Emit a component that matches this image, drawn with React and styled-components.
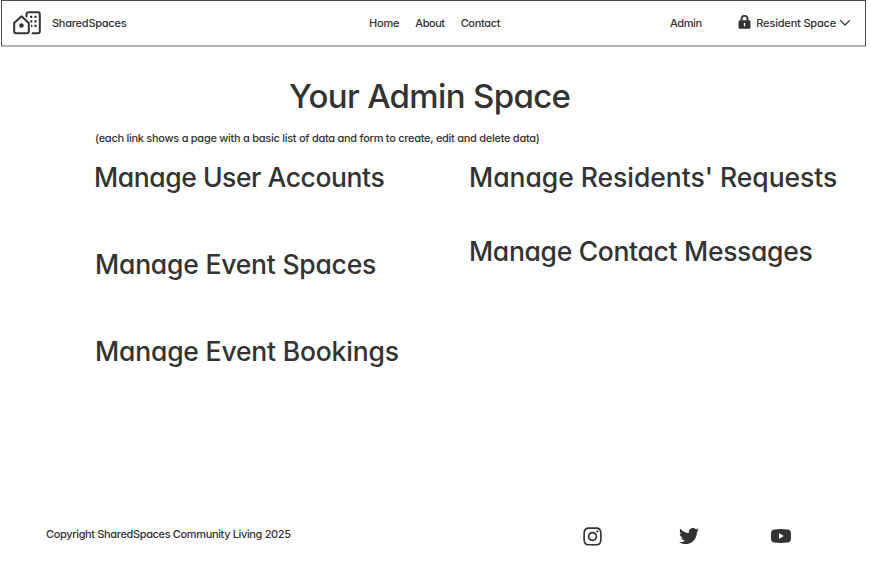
import React from "react";
import styled, { createGlobalStyle } from "styled-components";
import { FaInstagram, FaTwitter } from "react-icons/fa";

const ink = "#333333";

const Global = createGlobalStyle`
  * { box-sizing: border-box; }
  body { margin: 0; background: #fff; color: ${ink}; font-family: Inter, "Liberation Sans", sans-serif; font-feature-settings: "cv11"; }
  svg { display: block; flex: none; }
`;

const Page = styled.div`
  width: 871px;
  height: 573px;
  overflow: hidden;
`;

const Header = styled.header`
  display: grid;
  grid-template-columns: 356px 300px 1fr;
  align-items: center;
  width: 865px;
  height: 47px;
  margin-left: 1px;
  padding: 0 0 1px 11px;
  border: 1px solid #4a4a4a;
  border-bottom: 2px solid #b4b4b4;
`;

const Brand = styled.a`
  display: flex;
  align-items: center;
  gap: 11px;
`;

const Nav = styled.nav`
  display: flex;
  align-items: center;
  gap: 16px;
`;

const Account = styled.div`
  display: flex;
  align-items: center;
  justify-content: space-between;
  padding: 0 15px 0 1px;
`;

const SpaceMenu = styled.button`
  display: flex;
  align-items: center;
  gap: 4px;
  padding: 0;
  border: 0;
  background: none;
  color: inherit;
  font: inherit;
  font-feature-settings: inherit;
`;

const Small = styled.span`
  font-size: 11px;
  line-height: 16px;
  font-weight: 500;
  white-space: nowrap;
  letter-spacing: ${(p) => p.$track || 0}px;
`;

const Title = styled.h1`
  margin: 29px 0 0 289px;
  font-size: 33px;
  line-height: 40px;
  font-weight: 500;
  white-space: nowrap;
  letter-spacing: -0.66px;
`;

const Note = styled.p`
  margin: 12px 0 0 95px;
  line-height: 16px;
`;

const Columns = styled.main`
  display: grid;
  grid-template-columns: 375px 1fr;
  margin: 15px 0 0 94px;
  height: 341px;
  align-items: start;
`;

const Column = styled.div`
  display: flex;
  flex-direction: column;
  gap: ${(p) => p.$gap}px;
`;

const Link = styled.a`
  margin-left: ${(p) => p.$indent || 0}px;
  font-size: 26.5px;
  line-height: 32px;
  font-weight: 500;
  white-space: nowrap;
  letter-spacing: ${(p) => p.$track}px;
`;

const Footer = styled.footer`
  display: grid;
  grid-template-columns: 536px 97px 92px 1fr;
  align-items: start;
  margin: 24px 0 0 46px;
`;

const SocialIcon = styled.a`
  display: flex;
  align-items: center;
  height: 20px;
`;

const Logo = () => (
  <svg width="28" height="24" viewBox="0 0 28 24" fill="none" stroke={ink} strokeWidth="2" strokeLinejoin="round" strokeLinecap="round">
    <path d="M1.2 12.1 8.5 5.3l7.3 6.8v8.4a1.8 1.8 0 0 1-1.8 1.8H3a1.8 1.8 0 0 1-1.8-1.8z" />
    <path d="M13.5 5.5V3.2a2 2 0 0 1 2-2h9.3a2 2 0 0 1 2 2v17.1a2 2 0 0 1-2 2h-5.3" />
    <g fill={ink} stroke="none">
      <circle cx="8.5" cy="14.5" r="2.2" />
      <path d="M17 4.7h2.2v2.2H17zM21.4 4.7h2.2v2.2h-2.2zM17.3 9.2h2v2.2h-2zM21.4 9.2h2.2v2.2h-2.2zM21.4 13.7h2.2v2.2h-2.2zM18 13.7h1.4v2.2H18z" />
    </g>
  </svg>
);

const LockIcon = styled.svg`
  margin: 0 1px 2px 0;
`;

const Lock = () => (
  <LockIcon width="13" height="14" viewBox="0 0 13 14">
    <path d="M3.5 6V3.9a3 3 0 0 1 6 0V6" fill="none" stroke={ink} strokeWidth="1.9" />
    <rect x=".5" y="5.3" width="12" height="8.5" rx="1.5" fill={ink} />
    <path d="M6.5 8.4v2.4" stroke="#fff" strokeWidth="1.4" strokeLinecap="round" />
  </LockIcon>
);

const Chevron = () => (
  <svg width="10" height="6" viewBox="0 0 10 6" fill="none" stroke={ink} strokeWidth="1.3" strokeLinecap="round" strokeLinejoin="round">
    <path d="M.6.6 5 5 9.4.6" />
  </svg>
);

const Youtube = () => (
  <svg width="20" height="14" viewBox="0 0 20 14">
    <path d="M3 .4Q10-.3 17 .4q2.5.2 2.8 2.6.4 4 0 8-.3 2.4-2.8 2.6-7 .7-14 0Q.5 13.4.2 11q-.4-4 0-8Q.5.6 3 .4z" fill={ink} />
    <path d="m8 4.2 4.8 2.8L8 9.8z" fill="#fff" />
  </svg>
);

export default function App() {
  return (
    <>
      <Global />
      <Page>
        <Header>
          <Brand><Logo /><Small $track={-0.24}>SharedSpaces</Small></Brand>
          <Nav><Small $track={-0.2}>Home</Small><Small $track={-0.45}>About</Small><Small $track={-0.35}>Contact</Small></Nav>
          <Account>
            <Small $track={-0.4}>Admin</Small>
            <SpaceMenu><Lock /><Small $track={-0.18}>Resident Space</Small><Chevron /></SpaceMenu>
          </Account>
        </Header>
        <Title>Your Admin Space</Title>
        <Note><Small $track={-0.275}>(each link shows a page with a basic list of data and form to create, edit and delete data)</Small></Note>
        <Columns>
          <Column $gap={55}>
            <Link $track={-0.43}>Manage User Accounts</Link>
            <Link $indent={1} $track={-0.22}>Manage Event Spaces</Link>
            <Link $indent={1} $track={-0.19}>Manage Event Bookings</Link>
          </Column>
          <Column $gap={42}>
            <Link $track={-0.03}>Manage Residents' Requests</Link>
            <Link $track={-0.32}>Manage Contact Messages</Link>
          </Column>
        </Columns>
        <Footer>
          <Small $track={-0.36}>Copyright SharedSpaces Community Living 2025</Small>
          <SocialIcon><FaInstagram size={21} /></SocialIcon>
          <SocialIcon><FaTwitter size={20} /></SocialIcon>
          <SocialIcon><Youtube /></SocialIcon>
        </Footer>
      </Page>
    </>
  );
}
